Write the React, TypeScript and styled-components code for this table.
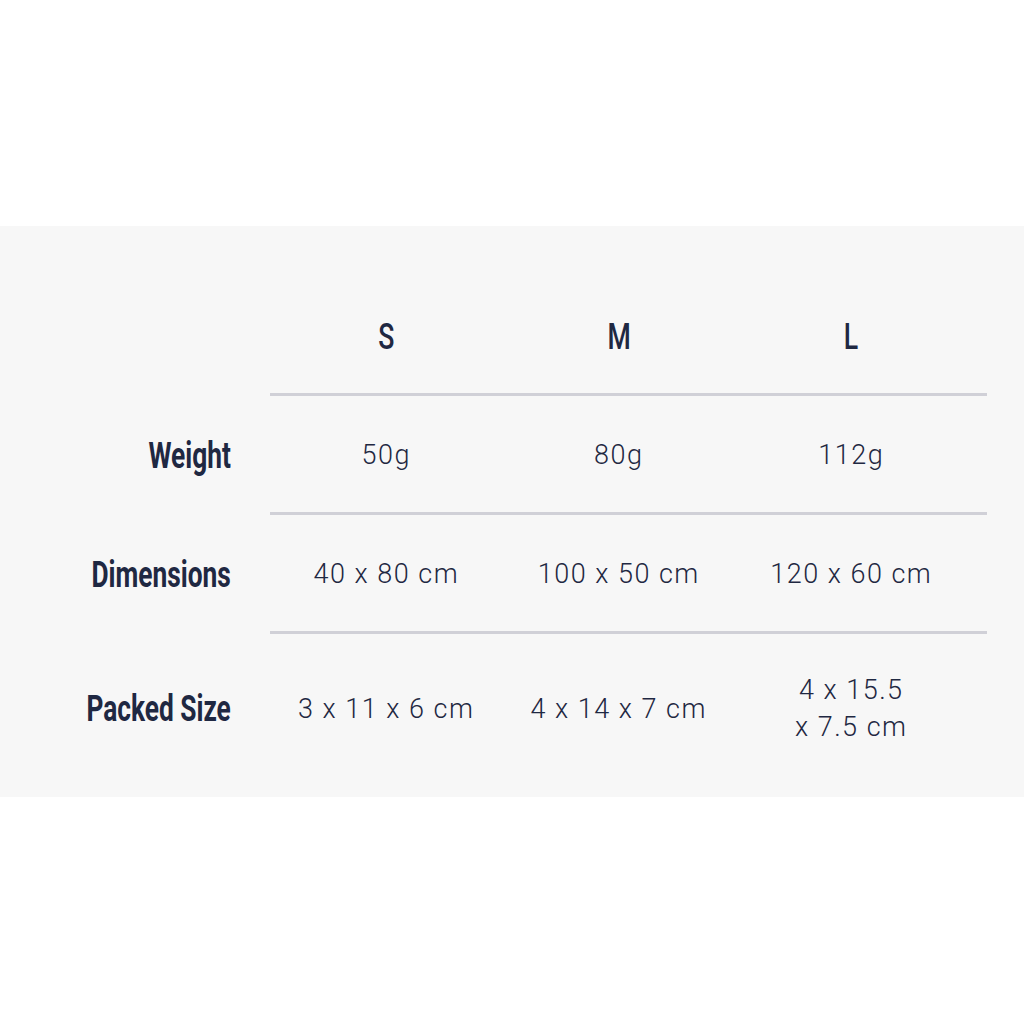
import React from "react";
import styled, { createGlobalStyle } from "styled-components";

const Global = createGlobalStyle`
  html, body { margin: 0; padding: 0; background: #ffffff; }
  body { font-family: Roboto, "Liberation Sans", sans-serif; color: #1f2842; }
`;

const Page = styled.div`
  padding-top: 226px;
  background: #ffffff;
  min-height: 1024px;
  box-sizing: border-box;
`;

const Panel = styled.section`
  background: #f7f7f7;
  padding: 0 37px 10px 0;
`;

const Row = styled.div`
  display: grid;
  grid-template-columns: 270px 1fr;
`;

const LabelCell = styled.div<{ $last?: boolean }>`
  display: flex;
  justify-content: flex-end;
  align-items: center;
  padding-right: 39px;
  padding-top: ${(p) => (p.$last ? "0" : "7px")};
`;

const Label = styled.span`
  display: inline-block;
  font-family: Roboto, "Liberation Sans", sans-serif;
  font-weight: 700;
  font-size: 36px;
  line-height: 37px;
  color: #1f2842;
  white-space: nowrap;
  transform: scaleX(0.73);
  transform-origin: right center;
`;

const Cells = styled.div<{ $header?: boolean; $last?: boolean }>`
  display: grid;
  grid-template-columns: repeat(3, 232.5px) 1fr;
  align-items: center;
  border-top: ${(p) => (p.$header ? "none" : "3px solid #d0d0d7")};
  padding: ${(p) =>
    p.$header ? "93px 0 31px" : p.$last ? "38px 0 41px" : "41px 0 38px"};
`;

const HeadCell = styled.div`
  text-align: center;
  line-height: 36px;
`;

const HeadText = styled.span`
  display: inline-block;
  font-family: Roboto, "Liberation Sans", sans-serif;
  font-weight: 500;
  font-size: 37px;
  color: #1f2842;
  transform: scaleX(0.72);
  transform-origin: center;
`;

const Value = styled.div`
  text-align: center;
  font-family: Roboto, "Liberation Sans", sans-serif;
  font-weight: 300;
  font-size: 27px;
  line-height: 37px;
  letter-spacing: 1.5px;
  color: #1f2842;
  white-space: nowrap;
`;

const sizes = ["S", "M", "L"];

const rows: { label: string; values: React.ReactNode[] }[] = [
  { label: "Weight", values: ["50g", "80g", "112g"] },
  { label: "Dimensions", values: ["40 x 80 cm", "100 x 50 cm", "120 x 60 cm"] },
  {
    label: "Packed Size",
    values: [
      "3 x 11 x 6 cm",
      "4 x 14 x 7 cm",
      <>
        4 x 15.5
        <br />x 7.5 cm
      </>,
    ],
  },
];

export default function App() {
  return (
    <>
      <Global />
      <Page>
        <Panel>
          <Row>
            <div />
            <Cells $header>
              {sizes.map((s) => (
                <HeadCell key={s}>
                  <HeadText>{s}</HeadText>
                </HeadCell>
              ))}
            </Cells>
          </Row>
          {rows.map((r, idx) => {
            const last = idx === rows.length - 1;
            return (
              <Row key={r.label}>
                <LabelCell $last={last}>
                  <Label>{r.label}</Label>
                </LabelCell>
                <Cells $last={last}>
                  {r.values.map((v, i) => (
                    <Value key={i}>{v}</Value>
                  ))}
                </Cells>
              </Row>
            );
          })}
        </Panel>
      </Page>
    </>
  );
}
